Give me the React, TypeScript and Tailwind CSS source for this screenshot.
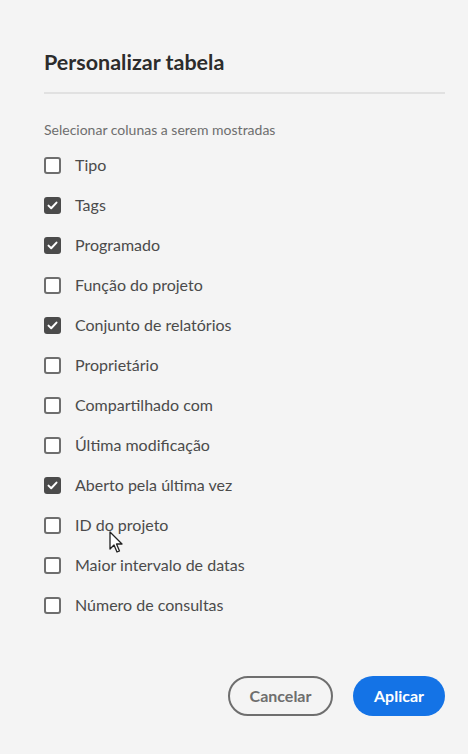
const columns = [
  { label: "Tipo", checked: false },
  { label: "Tags", checked: true },
  { label: "Programado", checked: true },
  { label: "Função do projeto", checked: false },
  { label: "Conjunto de relatórios", checked: true },
  { label: "Proprietário", checked: false },
  { label: "Compartilhado com", checked: false },
  { label: "Última modificação", checked: false },
  { label: "Aberto pela última vez", checked: true },
  { label: "ID do projeto", checked: false },
  { label: "Maior intervalo de datas", checked: false },
  { label: "Número de consultas", checked: false },
];

function Checkbox({ checked }: { checked: boolean }) {
  if (checked) {
    return (
      <span className="flex h-[17px] w-[17px] shrink-0 items-center justify-center rounded-[3px] bg-[#4b4b4b]">
        <svg width="11" height="9" viewBox="0 0 11 9" fill="none">
          <path d="M1.5 4.6 L4.2 7.2 L9.5 1.6" stroke="#fff" strokeWidth="2" strokeLinecap="round" strokeLinejoin="round" />
        </svg>
      </span>
    );
  }
  return <span className="h-[17px] w-[17px] shrink-0 rounded-[3px] border-2 border-[#6e6e6e] bg-white" />;
}

export default function App() {
  return (
    <div className="relative min-h-screen bg-[#f4f4f4] pl-[44px] pr-[23px] pt-[48px] text-[#4b4b4b]" style={{ fontFamily: "Lato, 'Open Sans', sans-serif" }}>
      <h1 className="text-[21.5px] font-bold leading-[28px] text-[#2c2c2c]">Personalizar tabela</h1>
      <div className="mt-[16px] h-[2px] bg-[#e1e1e1]" />
      <p className="mt-[27px] text-[14px] leading-[18px] text-[#6e6e6e]">Selecionar colunas a serem mostradas</p>

      {/* colunas */}
      <ul className="mt-[6px] flex flex-col">
        {columns.map((c) => (
          <li key={c.label} className="flex h-[40px] items-center gap-[14px]">
            <Checkbox checked={c.checked} />
            <span className="text-[16px] text-[#4b4b4b]">{c.label}</span>
          </li>
        ))}
      </ul>

      <div className="mt-[51px] flex justify-end gap-[20px]">
        <button className="h-[40px] w-[105px] rounded-full border-2 border-[#6e6e6e] text-[16px] font-bold text-[#6e6e6e]">Cancelar</button>
        <button className="h-[40px] w-[92px] rounded-full bg-[#1473e6] text-[16px] font-bold text-white">Aplicar</button>
      </div>

      {/* ponteiro do mouse */}
      <svg className="absolute left-[109px] top-[531px]" width="16" height="24" viewBox="0 0 16 24">
        <path d="M1 1 L1 18 L5 14 L8 21 L10.5 20 L7.5 13 L13 13 Z" fill="#fff" stroke="#222" strokeWidth="1.3" strokeLinejoin="round" />
      </svg>
    </div>
  );
}
